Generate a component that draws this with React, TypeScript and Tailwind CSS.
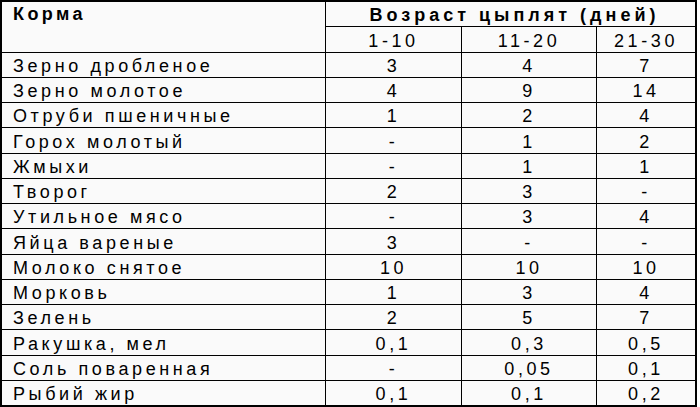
import React from 'react';

const rows: [string, string, string, string][] = [
    ['Зерно дробленое', '3', '4', '7'],
    ['Зерно молотое', '4', '9', '14'],
    ['Отруби пшеничные', '1', '2', '4'],
    ['Горох молотый', '-', '1', '2'],
    ['Жмыхи', '-', '1', '1'],
    ['Творог', '2', '3', '-'],
    ['Утильное мясо', '-', '3', '4'],
    ['Яйца вареные', '3', '-', '-'],
    ['Молоко снятое', '10', '10', '10'],
    ['Морковь', '1', '3', '4'],
    ['Зелень', '2', '5', '7'],
    ['Ракушка, мел', '0,1', '0,3', '0,5'],
    ['Соль поваренная', '-', '0,05', '0,1'],
    ['Рыбий жир', '0,1', '0,1', '0,2'],
];

const cell = 'bg-[#fafafa] flex items-end leading-none pb-[2px]';

export default function App() {
    return (
        <div className="w-[700px] h-[407px] bg-white text-black font-['Liberation_Sans',Arial,sans-serif] text-[18px] tracking-[3.6px]">
            <div className="w-[697px] h-[407px] border-2 border-black bg-black grid grid-cols-[323px_135px_134px_98px] grid-rows-[repeat(16,24.25px)] gap-px">
                <div className="row-span-2 bg-[#fafafa] font-bold pl-[11px] pt-[3px] leading-none tracking-[3.4px]">Корма</div>
                <div className={`${cell} col-span-3 justify-center font-bold tracking-[4px] pl-[8px]`}>Возраст цыплят (дней)</div>
                <div className={`${cell} justify-center`}>1-10</div>
                <div className={`${cell} justify-center`}>11-20</div>
                <div className={`${cell} justify-center`}>21-30</div>
                {rows.map((r) => (
                    <React.Fragment key={r[0]}>
                        <div className={`${cell} pl-[11px]`}>{r[0]}</div>
                        <div className={`${cell} justify-center`}>{r[1]}</div>
                        <div className={`${cell} justify-center`}>{r[2]}</div>
                        <div className={`${cell} justify-center`}>{r[3]}</div>
                    </React.Fragment>
                ))}
            </div>
        </div>
    );
}
